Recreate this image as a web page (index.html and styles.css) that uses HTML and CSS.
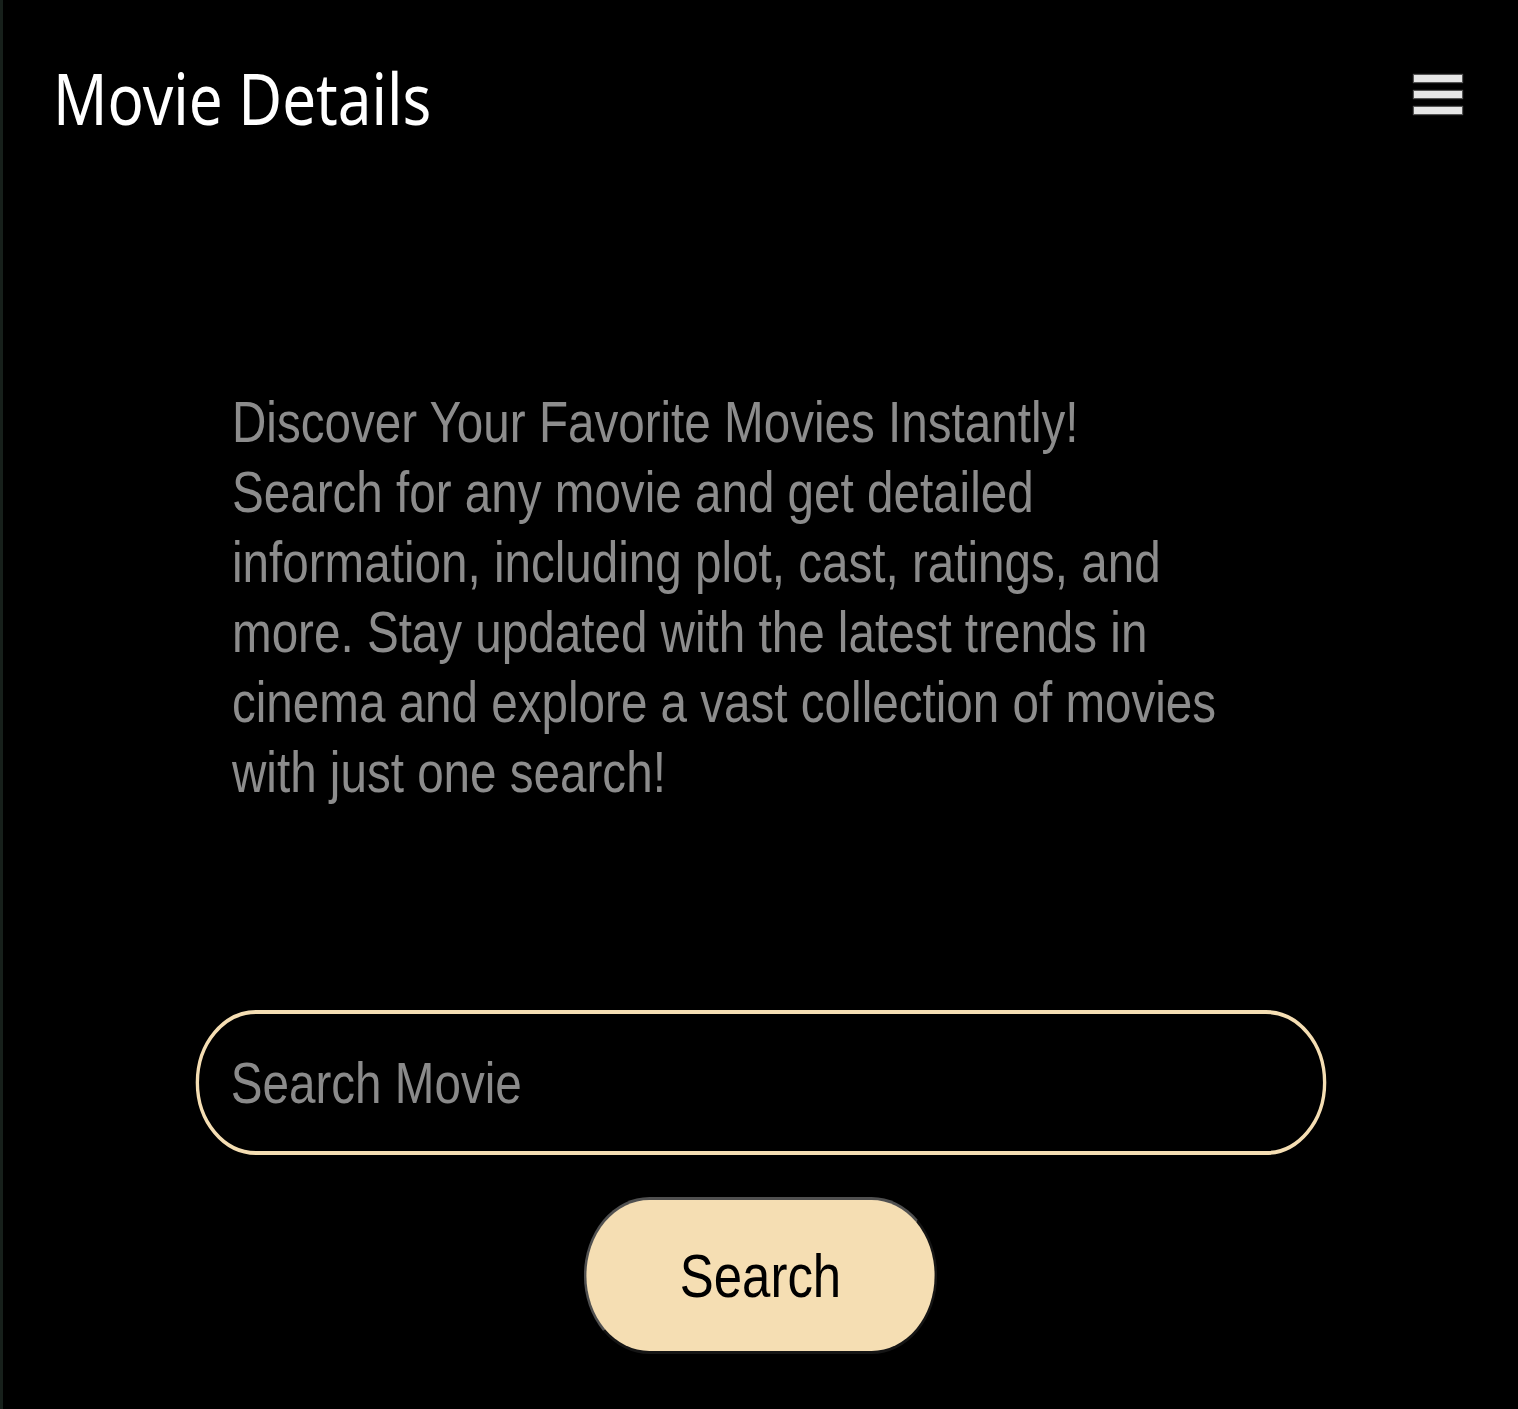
FILE: index.html
```html
<!DOCTYPE html>
<html lang="en">
<head>
<meta charset="utf-8">
<title>Movie Details</title>
<link rel="stylesheet" href="styles.css">
</head>
<body>
<div class="page">
  <header class="topbar">
    <h1 class="brand">Movie Details</h1>
    <button class="menu" type="button" aria-label="Menu">
      <span class="menu-bar"></span>
      <span class="menu-bar"></span>
      <span class="menu-bar"></span>
    </button>
  </header>
  <main class="hero">
    <p class="intro">Discover Your Favorite Movies Instantly!<br>Search for any movie and get detailed information, including plot, cast, ratings, and more. Stay updated with the latest trends in cinema and explore a vast collection of movies with just one search!</p>
    <form class="search" onsubmit="return false">
      <input class="search-input" type="text" placeholder="Search Movie">
      <button class="search-btn" type="submit">Search</button>
    </form>
  </main>
</div>
</body>
</html>
```

FILE: styles.css
```css
html, body {
  margin: 0;
  padding: 0;
  background: #000;
}

.page {
  box-sizing: border-box;
  min-height: 1409px;
  border-left: 3px solid #17201b;
  background: #000;
}

.topbar {
  display: flex;
  align-items: center;
  justify-content: space-between;
  padding: 54px 56px 0 50px;
}

/* text in this design is set horizontally condensed */
.brand {
  margin: 0;
  font-family: "Noto Sans", "Open Sans", sans-serif;
  font-weight: 400;
  font-size: 72px;
  line-height: 86px;
  color: #fff;
  transform: scaleX(0.835);
  transform-origin: 0 50%;
}

.menu {
  display: flex;
  flex-direction: column;
  gap: 9px;
  margin-bottom: 5px;
  padding: 0;
  border: 0;
  background: transparent;
  cursor: pointer;
}

.menu-bar {
  display: block;
  width: 48px;
  height: 7px;
  background: #e6e6e6;
  box-shadow: 0 0 1px 1px #555;
}

.hero {
  width: 1354px;
  margin: 0 auto;
  padding-top: 247px;
}

.intro {
  margin: 0 0 0 148px;
  width: 1195px;
  font-family: "Liberation Sans", Arial, sans-serif;
  font-size: 57px;
  line-height: 70px;
  color: #8c8c8c;
  transform: scaleX(0.835);
  transform-origin: 0 0;
}

.search {
  display: flex;
  flex-direction: column;
  align-items: center;
  gap: 42px;
  margin-top: 203px;
}

.search-input {
  box-sizing: border-box;
  width: 1354px;
  height: 145px;
  padding: 0 38px;
  border: 4px solid #f5deb3;
  border-radius: 9999px;
  background: #000;
  color: #ddd;
  outline: none;
  font-family: "Liberation Sans", Arial, sans-serif;
  font-size: 57px;
  transform: scaleX(0.835);
}

.search-input::placeholder {
  color: #8a8a8a;
}

.search-btn {
  box-sizing: border-box;
  width: 423px;
  height: 157px;
  border: 3px solid;
  border-color: #505050 #151515 #151515 #505050;
  border-radius: 9999px;
  background: #f5deb3;
  color: #000;
  font-family: "Liberation Sans", Arial, sans-serif;
  font-size: 61px;
  cursor: pointer;
  transform: scaleX(0.835);
}
```
